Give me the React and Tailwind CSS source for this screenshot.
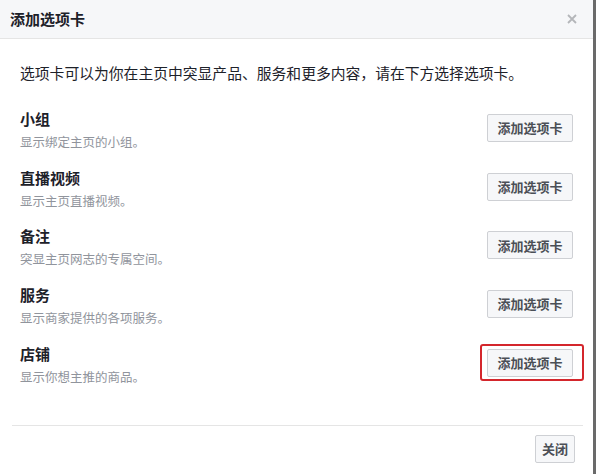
import React from "react";

const tabs = [
  { name: "小组", desc: "显示绑定主页的小组。" },
  { name: "直播视频", desc: "显示主页直播视频。" },
  { name: "备注", desc: "突显主页网志的专属空间。" },
  { name: "服务", desc: "显示商家提供的各项服务。" },
  { name: "店铺", desc: "显示你想主推的商品。", marked: true },
];

const font = { fontFamily: '"Noto Sans CJK SC", "Noto Sans", sans-serif' };

const TabRow = ({ name, desc, marked }) => (
  <div className="flex items-start justify-between h-[42px]">
    <div className="flex flex-col">
      <div className="text-[15px] leading-[20px] font-bold text-[#1d2129]">{name}</div>
      <div className="mt-[4px] text-[12.5px] leading-[18px] text-[#90949c]">{desc}</div>
    </div>
    <div className="relative mt-[5px]">
      <button className="w-[86px] h-[28px] bg-[#f6f7f9] border border-[#ced0d4] rounded-[2px] text-[13px] font-bold text-[#4b4f56]">
        添加选项卡
      </button>
      {/* red highlight drawn over the button */}
      {marked && (
        <span className="absolute -left-[7px] -right-[11px] -top-[5px] -bottom-[4px] border-2 border-[#d4262c] rounded-[3px]" />
      )}
    </div>
  </div>
);

export default function App() {
  return (
    <div style={font} className="w-[596px] h-[474px] bg-white border-r-[3px] border-[#6a6a6a] flex flex-col">
      <div className="h-[39px] bg-[#f6f7f9] border-b border-[#e5e5e5] flex items-center justify-between pl-[10px] pr-[16px] shrink-0">
        <span className="text-[15px] font-bold text-[#1d2129]">添加选项卡</span>
        <svg width="10" height="10" viewBox="0 0 10 10">
          <path d="M1 1L9 9M9 1L1 9" stroke="#b4b6ba" strokeWidth="1.8" />
        </svg>
      </div>

      <div className="px-[20px] pt-[24px]">
        <p className="text-[14.8px] leading-[20px] text-[#1d2129]">
          选项卡可以为你在主页中突显产品、服务和更多内容，请在下方选择选项卡。
        </p>
        <div className="mt-[26px] flex flex-col gap-[16.7px]">
          {tabs.map((t) => (
            <TabRow key={t.name} {...t} />
          ))}
        </div>
      </div>

      <div className="mt-[39px] ml-[12px] mr-[10px] border-t border-[#e5e5e5]" />
      <div className="flex justify-end pr-[18px] pt-[9px]">
        <button className="w-[40px] h-[28px] bg-[#f6f7f9] border border-[#ced0d4] rounded-[2px] text-[13px] font-bold text-[#4b4f56]">
          关闭
        </button>
      </div>
    </div>
  );
}
